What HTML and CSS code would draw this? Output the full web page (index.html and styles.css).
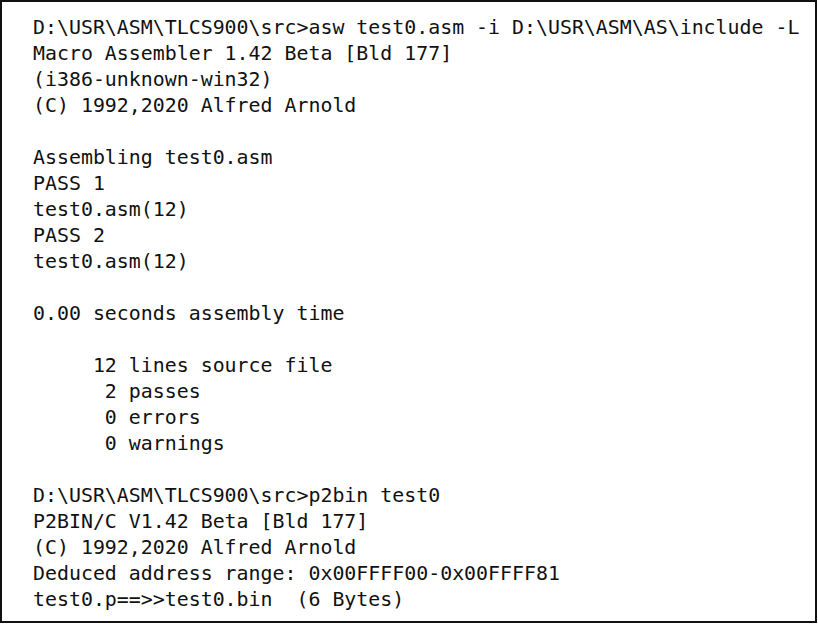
FILE: index.html
```html
<!DOCTYPE html>
<html>
<head>
<meta charset="utf-8">
<link rel="stylesheet" href="styles.css">
</head>
<body>
<div class="console">
<pre class="output">D:\USR\ASM\TLCS900\src&gt;asw test0.asm -i D:\USR\ASM\AS\include -L
Macro Assembler 1.42 Beta [Bld 177]
(i386-unknown-win32)
(C) 1992,2020 Alfred Arnold

Assembling test0.asm
PASS 1
test0.asm(12)
PASS 2
test0.asm(12)

0.00 seconds assembly time

     12 lines source file
      2 passes
      0 errors
      0 warnings

D:\USR\ASM\TLCS900\src&gt;p2bin test0
P2BIN/C V1.42 Beta [Bld 177]
(C) 1992,2020 Alfred Arnold
Deduced address range: 0x00FFFF00-0x00FFFF81
test0.p==&gt;&gt;test0.bin  (6 Bytes)</pre>
</div>
</body>
</html>
```
FILE: styles.css
```css
html, body {
  margin: 0;
  padding: 0;
  background: #fff;
}
.console {
  box-sizing: border-box;
  width: 817px;
  height: 623px;
  border: 2px solid #111;
  padding: 13px 0 0 31px;
  overflow: hidden;
}
.output {
  margin: 0;
  font-family: "DejaVu Sans Mono", "Liberation Mono", monospace;
  font-size: 19.9px;
  line-height: 26px;
  color: #111;
  white-space: pre;
}
```
